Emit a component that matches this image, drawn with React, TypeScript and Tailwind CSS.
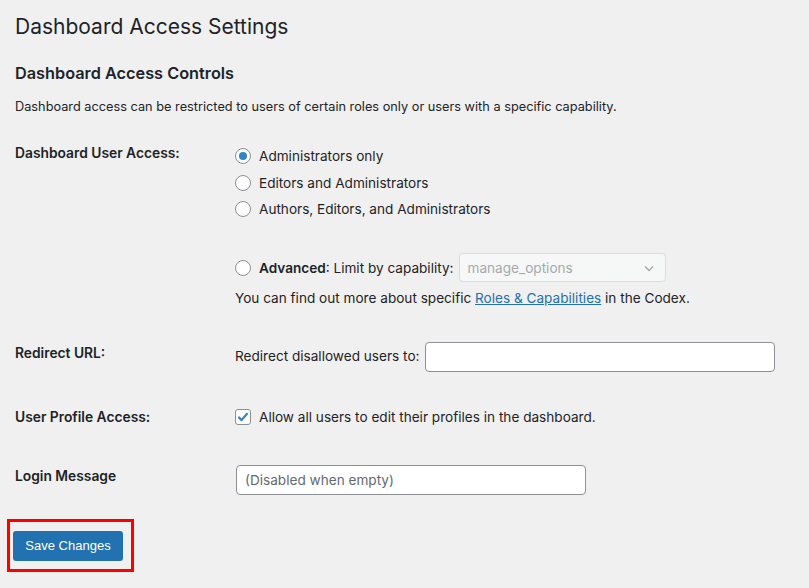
import React from "react";

const Radio = ({ checked }: { checked?: boolean }) => (
  <span className="w-4 h-4 rounded-full border border-[#8c8f94] bg-white flex items-center justify-center shrink-0">
    {checked && <span className="w-2 h-2 rounded-full bg-[#3582c4]" />}
  </span>
);

const Label = ({ children }: { children: React.ReactNode }) => (
  <div className="w-[220px] shrink-0 text-[13.8px] font-semibold text-[#1d2327] leading-5">{children}</div>
);

export default function App() {
  return (
    <div className="bg-[#f0f0f1] w-full min-h-[588px] text-[#1d2327] [font-family:Inter,'Noto_Sans',sans-serif] px-[15px] pt-[12px]">
      <h1 className="text-[21px] font-normal leading-[30px]">Dashboard Access Settings</h1>
      <h2 className="mt-[20px] text-[16.3px] font-semibold leading-[22px]">Dashboard Access Controls</h2>
      <p className="mt-[13px] text-[12.75px] leading-5">
        Dashboard access can be restricted to users of certain roles only or users with a specific capability.
      </p>

      <div className="flex mt-[26px]">
        <Label>Dashboard User Access:</Label>
        <div className="flex flex-col text-[13.6px] leading-5 pt-[3px]">
          <label className="flex items-center gap-2 h-5"><Radio checked />Administrators only</label>
          <label className="flex items-center gap-2 h-5 mt-[7px]"><Radio />Editors and Administrators</label>
          <label className="flex items-center gap-2 h-5 mt-[6px]"><Radio />Authors, Editors, and Administrators</label>
          <div className="flex items-center gap-2 mt-[34px]">
            <Radio />
            <span><b className="font-semibold">Advanced</b>: Limit by capability:</span>
            <div className="ml-[-3px] w-[207px] h-[29px] border border-[#dcdcde] rounded-[4px] bg-[#f6f7f7] flex items-center justify-between pl-2 pr-[10px] text-[#a7aaad]">
              <span>manage_options</span>
              <svg width="12" height="12" viewBox="0 0 12 12" fill="none" stroke="#a7aaad" strokeWidth="1.5">
                <path d="M2 4.5l4 4 4-4" />
              </svg>
            </div>
          </div>
          <p className="mt-[6px]">
            You can find out more about specific{" "}
            <a className="text-[#2271b1] underline" href="#">Roles &amp; Capabilities</a> in the Codex.
          </p>
        </div>
      </div>

      <div className="flex mt-[35px]">
        <Label>Redirect URL:</Label>
        <div className="flex items-center gap-[6px] text-[13.6px] -mt-[2px]">
          <span className="-mt-[1px]">Redirect disallowed users to:</span>
          <div className="mt-[1px] w-[350px] h-[30px] border border-[#8c8f94] rounded-[4px] bg-white" />
        </div>
      </div>

      <div className="flex mt-[35px]">
        <Label>User Profile Access:</Label>
        <label className="flex items-center gap-2 text-[13.6px] leading-5">
          <span className="w-4 h-4 rounded-[3px] border border-[#8c8f94] bg-white flex items-center justify-center">
            <svg width="14" height="14" viewBox="0 0 14 14" fill="none" stroke="#3582c4" strokeWidth="2.2" strokeLinecap="round" strokeLinejoin="round">
              <path d="M3 7.5l2.6 2.6L11 3.8" />
            </svg>
          </span>
          Allow all users to edit their profiles in the dashboard.
        </label>
      </div>

      <div className="flex mt-[39px]">
        <Label>Login Message</Label>
        <div className="ml-[1px] -mt-[1px] w-[350px] h-[30px] border border-[#8c8f94] rounded-[4px] bg-white flex items-center px-2 text-[13.6px] text-[#646970]">
          (Disabled when empty)
        </div>
      </div>

      <div className="mt-[24px] -ml-[8px] w-[127px] h-[53px] border-[3px] border-[#ff0000] flex items-center pl-[3px]">
        <button className="w-[110px] h-[30px] bg-[#2271b1] text-white text-[13px] rounded-[3px] [font-family:'Liberation_Sans',Arial,sans-serif]">
          Save Changes
        </button>
      </div>
    </div>
  );
}
